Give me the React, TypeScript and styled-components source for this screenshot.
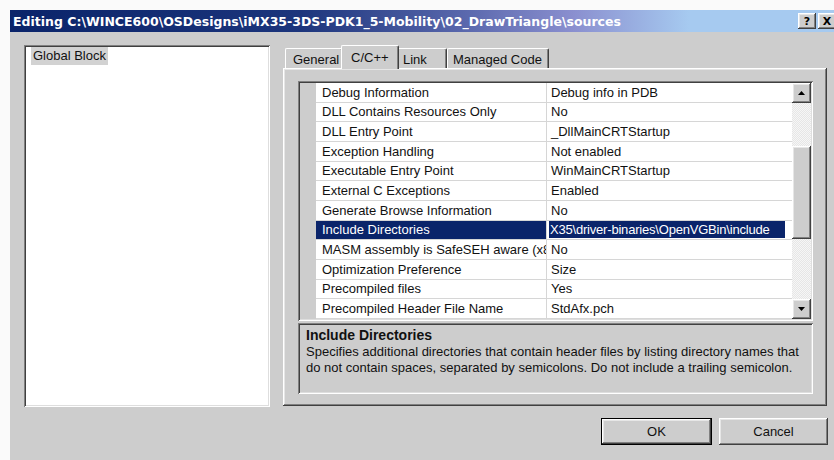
import React from 'react';
import styled, { createGlobalStyle, css } from 'styled-components';

const colors = {
  face: '#cdcdcd',
  light: '#ffffff',
  shadow: '#808080',
  dark: '#404040',
  navy: '#0a246a',
  gridLine: '#d6d6d6',
  text: '#111111'
};

const raised = css`
  box-shadow: inset -1px -1px ${colors.dark}, inset 1px 1px ${colors.light},
    inset -2px -2px ${colors.shadow}, inset 2px 2px #e6e6e6;
`;

const sunken = css`
  box-shadow: inset 1px 1px ${colors.shadow}, inset -1px -1px ${colors.light},
    inset 2px 2px ${colors.dark}, inset -2px -2px #dedede;
`;

const GlobalStyle = createGlobalStyle`
  html, body {
    margin: 0;
    background: #fafafa;
    overflow: hidden;
  }
  body {
    font-family: "Liberation Sans", Arial, sans-serif;
    font-size: 13px;
    color: ${colors.text};
  }
`;

const Page = styled.div`
  width: 834px;
  height: 460px;
  padding: 10px 0 0 10px;
  box-sizing: border-box;
  overflow: hidden;
`;

const Window = styled.div`
  width: 828px;
  height: 460px;
  background: ${colors.face};
  display: flex;
  flex-direction: column;
`;

const TitleBar = styled.div`
  height: 22px;
  display: flex;
  align-items: center;
  padding: 0 2px 0 3px;
  background: linear-gradient(to right, #0a246a 0%, #1c357c 35%, #5a68ad 55%, #8a8fcf 68%, #a6caf0 82%, #a6caf0 100%);
`;

const Title = styled.div`
  flex: 1;
  color: #ffffff;
  font-family: "DejaVu Sans", Verdana, sans-serif;
  font-weight: bold;
  font-size: 12.5px;
  white-space: nowrap;
`;

const CaptionButtons = styled.div`
  display: flex;
  gap: 2px;
`;

const CaptionButton = styled.div`
  width: 18px;
  height: 16px;
  background: ${colors.face};
  ${raised};
  display: flex;
  align-items: center;
  justify-content: center;
  font-family: "DejaVu Sans", Verdana, sans-serif;
  font-weight: bold;
  font-size: 11px;
  color: #000;
`;

const Main = styled.div`
  display: flex;
  gap: 13px;
  padding: 13px 0 0 14px;
`;

const BlockList = styled.div`
  width: 246px;
  height: 362px;
  background: #ffffff;
  ${sunken};
  padding: 2px 0 0 7px;
  box-sizing: border-box;
`;

const ListItem = styled.div<{ selected?: boolean }>`
  display: inline-block;
  padding: 1px 2px 2px 2px;
  background: ${({ selected }) => (selected ? '#d2d2d2' : 'transparent')};
`;

const TabArea = styled.div`
  width: 544px;
  display: flex;
  flex-direction: column;
`;

const TabStrip = styled.div`
  height: 23px;
  display: flex;
  align-items: flex-end;
  padding-left: 2px;
  position: relative;
  z-index: 1;
`;

const Tab = styled.div<{ active?: boolean; width: number; inset: number }>`
  width: ${({ width }) => width}px;
  height: ${({ active }) => (active ? 24 : 20)}px;
  margin: 0 ${({ active }) => (active ? -2 : 0)}px ${({ active }) => (active ? -1 : 0)}px;
  padding-left: ${({ inset }) => inset}px;
  box-sizing: border-box;
  display: flex;
  align-items: center;
  background: ${colors.face};
  border-top: 1px solid ${colors.light};
  border-left: 1px solid ${colors.light};
  border-right: 1px solid ${colors.dark};
  box-shadow: inset -1px 0 ${colors.shadow};
  border-radius: 2px 2px 0 0;
  padding-top: ${({ active }) => (active ? 0 : 1)}px;
  white-space: nowrap;
  position: relative;
  z-index: ${({ active }) => (active ? 2 : 1)};
`;

const TabPanel = styled.div`
  height: 338px;
  background: ${colors.face};
  ${raised};
  padding: 13px 14px 12px 15px;
  box-sizing: border-box;
  display: flex;
  flex-direction: column;
  gap: 2px;
`;

const PropertyGrid = styled.div`
  height: 240px;
  ${sunken};
  padding: 2px;
  box-sizing: border-box;
  display: flex;
  background: #ffffff;
`;

const Rows = styled.div`
  flex: 1;
  display: grid;
  grid-template-columns: 16px 231px 245px;
  grid-template-rows: repeat(12, 1fr);
`;

const Margin = styled.div`
  background: ${colors.face};
`;

const NameCell = styled.div<{ selected?: boolean }>`
  padding-left: 6px;
  display: flex;
  align-items: center;
  white-space: nowrap;
  overflow: hidden;
  background: ${({ selected }) => (selected ? colors.navy : '#ffffff')};
  color: ${({ selected }) => (selected ? '#ffffff' : colors.text)};
  border-bottom: 1px solid ${colors.gridLine};
  border-right: 1px solid ${colors.gridLine};
`;

const ValueCell = styled.div`
  padding-left: 4px;
  display: flex;
  align-items: center;
  white-space: nowrap;
  overflow: hidden;
  background: #ffffff;
  border-bottom: 1px solid ${colors.gridLine};
`;

const SelectedValue = styled.span`
  display: block;
  width: 235px;
  margin-left: -2px;
  padding: 1px 0 1px 1px;
  background: ${colors.navy};
  color: #ffffff;
  overflow: hidden;
  letter-spacing: -0.2px;
`;

const ScrollBar = styled.div`
  width: 19px;
  display: flex;
  flex-direction: column;
  background: #ececec;
`;

const ScrollButton = styled.div`
  height: 20px;
  background: ${colors.face};
  ${raised};
  display: flex;
  align-items: center;
  justify-content: center;
`;

const Track = styled.div`
  flex: 1;
  background-image: repeating-conic-gradient(#f6f6f6 0 25%, #e6e6e6 0 50%);
  background-size: 2px 2px;
`;

const Thumb = styled.div`
  margin-top: 43px;
  height: 93px;
  background: ${colors.face};
  ${raised};
`;

const Description = styled.div`
  flex: 1;
  ${sunken};
  padding: 4px 6px 0 8px;
  line-height: 16px;
  white-space: nowrap;
`;

const DescriptionTitle = styled.div`
  font-weight: bold;
  font-size: 14px;
  line-height: 17px;
`;

const ButtonRow = styled.div`
  display: flex;
  justify-content: flex-end;
  gap: 7px;
  padding: 11px 10px 0 0;
`;

const DialogButton = styled.div<{ isDefault?: boolean }>`
  width: ${({ isDefault }) => (isDefault ? 111 : 109)}px;
  height: 27px;
  box-sizing: border-box;
  display: flex;
  align-items: center;
  justify-content: center;
  background: ${colors.face};
  ${raised};
  ${({ isDefault }) =>
    isDefault &&
    css`
      border: 1px solid #000;
    `}
`;

const Arrow = ({ down }: { down?: boolean }) => (
  <svg width="7" height="4" viewBox="0 0 7 4">
    <polygon points={down ? '0,0 7,0 3.5,4' : '0,4 7,4 3.5,0'} fill="#000" />
  </svg>
);

const tabs = [
  { label: 'General', width: 58, inset: 7 },
  { label: 'C/C++', width: 58, inset: 9, active: true },
  { label: 'Link', width: 50, inset: 5 },
  { label: 'Managed Code', width: 102, inset: 5 }
];

const properties = [
  ['Debug Information', 'Debug info in PDB'],
  ['DLL Contains Resources Only', 'No'],
  ['DLL Entry Point', '_DllMainCRTStartup'],
  ['Exception Handling', 'Not enabled'],
  ['Executable Entry Point', 'WinMainCRTStartup'],
  ['External C Exceptions', 'Enabled'],
  ['Generate Browse Information', 'No'],
  ['Include Directories', 'X35\\driver-binaries\\OpenVGBin\\include'],
  ['MASM assembly is SafeSEH aware (x86)', 'No'],
  ['Optimization Preference', 'Size'],
  ['Precompiled files', 'Yes'],
  ['Precompiled Header File Name', 'StdAfx.pch']
];

const selectedProperty = 'Include Directories';

const App = () => (
  <Page>
    <GlobalStyle />
    <Window>
      <TitleBar>
        <Title>Editing C:\WINCE600\OSDesigns\iMX35-3DS-PDK1_5-Mobility\02_DrawTriangle\sources</Title>
        <CaptionButtons>
          <CaptionButton>?</CaptionButton>
          <CaptionButton>X</CaptionButton>
        </CaptionButtons>
      </TitleBar>
      <Main>
        <BlockList>
          <ListItem selected>Global Block</ListItem>
        </BlockList>
        <TabArea>
          <TabStrip>
            {tabs.map((t) => (
              <Tab key={t.label} active={t.active} width={t.width} inset={t.inset}>
                {t.label}
              </Tab>
            ))}
          </TabStrip>
          <TabPanel>
            <PropertyGrid>
              <Rows>
                {properties.map(([name, value]) => {
                  const selected = name === selectedProperty;
                  return (
                    <React.Fragment key={name}>
                      <Margin />
                      <NameCell selected={selected}>{name}</NameCell>
                      <ValueCell>{selected ? <SelectedValue>{value}</SelectedValue> : value}</ValueCell>
                    </React.Fragment>
                  );
                })}
              </Rows>
              <ScrollBar>
                <ScrollButton>
                  <Arrow />
                </ScrollButton>
                <Track>
                  <Thumb />
                </Track>
                <ScrollButton>
                  <Arrow down />
                </ScrollButton>
              </ScrollBar>
            </PropertyGrid>
            <Description>
              <DescriptionTitle>Include Directories</DescriptionTitle>
              <div>Specifies additional directories that contain header files by listing directory names that</div>
              <div>do not contain spaces, separated by semicolons. Do not include a trailing semicolon.</div>
            </Description>
          </TabPanel>
        </TabArea>
      </Main>
      <ButtonRow>
        <DialogButton isDefault>OK</DialogButton>
        <DialogButton>Cancel</DialogButton>
      </ButtonRow>
    </Window>
  </Page>
);

export default App;
